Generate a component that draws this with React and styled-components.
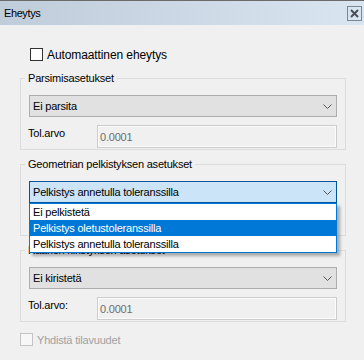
import React from "react"
import styled, { createGlobalStyle } from "styled-components"

const GlobalStyle = createGlobalStyle`
  html, body {
    margin: 0;
    padding: 0;
    background: #f0f0f0;
  }
  body {
    font-family: "Liberation Sans", Arial, sans-serif;
    font-size: 11px;
    letter-spacing: -0.2px;
    color: #000;
  }
`

const Window = styled.div`
  width: 364px;
  height: 360px;
  background: #f0f0f0;
  overflow: hidden;
`

const TitleBar = styled.div`
  height: 24px;
  border-top: 1px solid #6b6b6b;
  background: linear-gradient(to right, #bfccd9, #d9e5f1);
  display: flex;
  align-items: center;
  justify-content: space-between;
  padding: 0 2px 0 4px;
`

const Title = styled.span`
  font-size: 11px;
  letter-spacing: -0.4px;
  margin-top: -1px;
`

const CloseButton = styled.div`
  width: 13px;
  height: 13px;
  border: 1px solid #7d8794;
  display: flex;
  align-items: center;
  justify-content: center;
  margin-top: 1px;
`

const Body = styled.div`
  padding: 23px 18px 0 20px;
  display: flex;
  flex-direction: column;
`

const CheckRow = styled.label`
  display: flex;
  align-items: center;
  gap: 4px;
  height: 13px;
  margin-left: ${p => p.$indent || 0}px;
  margin-top: ${p => p.$top || 0}px;
  color: ${p => (p.$disabled ? "#a0a0a0" : "#000")};
  font-size: ${p => (p.$large ? "12px" : "11px")};
  letter-spacing: ${p => (p.$large ? "-0.1px" : "-0.2px")};
`

const CheckBox = styled.span`
  width: 11px;
  height: 11px;
  border: 1px solid ${p => (p.$disabled ? "#c4c4c4" : "#333")};
  background: ${p => (p.$disabled ? "#f7f7f7" : "#fff")};
  flex: none;
`

const Group = styled.div`
  position: relative;
  border: 1px solid #dcdcdc;
  padding: 16px 8px 1px 8px;
  margin-top: ${p => p.$top}px;
  display: flex;
  flex-direction: column;
  gap: 8px;
`

const Legend = styled.span`
  position: absolute;
  top: -7px;
  left: 4px;
  padding: 0 3px;
  line-height: 13px;
  background: #f0f0f0;
`

const ComboWrap = styled.div`
  position: relative;
  z-index: ${p => (p.$open ? 5 : 1)};
`

const Combo = styled.div`
  height: 20px;
  border: 1px solid ${p => (p.$focused ? "#005499" : "#adadad")};
  background: ${p => (p.$focused ? "#cce4f7" : "#e1e1e1")};
  display: flex;
  align-items: center;
  justify-content: space-between;
  padding: 0 4px 0 3px;
`

const ComboText = styled.span`
  line-height: 13px;
  margin-top: 1px;
`

const DropList = styled.div`
  position: absolute;
  top: 100%;
  left: 0;
  right: 0;
  border: 1px solid #0078d7;
  background: #fff;
  box-shadow: 3px 3px 3px rgba(0, 0, 0, 0.3);
`

const DropItem = styled.div`
  height: 16px;
  line-height: 16px;
  padding-left: 3px;
  background: ${p => (p.$selected ? "#0078d7" : "#fff")};
  color: ${p => (p.$selected ? "#fff" : "#000")};
`

const FieldRow = styled.div`
  display: flex;
  align-items: flex-start;
  visibility: ${p => (p.$covered ? "hidden" : "visible")};
`

const FieldLabel = styled.span`
  width: 68px;
  line-height: 13px;
  padding-top: 2px;
  margin-left: -1px;
  margin-right: 1px;
`

const TextInput = styled.div`
  flex: 1;
  height: 21px;
  border: 1px solid #cccccc;
  box-shadow: inset 0 0 0 1px #fbfbfb;
  background: #f0f0f0;
  color: #6d6d6d;
  display: flex;
  align-items: center;
  padding-left: 2px;
`

const Chevron = () => (
  <svg width="9" height="5" viewBox="0 0 9 5">
    <path d="M0.5 0.5 L4.5 4.5 L8.5 0.5" fill="none" stroke="#555" strokeWidth="1" />
  </svg>
)

const CloseIcon = () => (
  <svg width="9" height="9" viewBox="0 0 9 9">
    <path d="M1 1 L8 8 M8 1 L1 8" stroke="#4a4f57" strokeWidth="2" />
  </svg>
)

const pelkistysOptions = [
  "Ei pelkistetä",
  "Pelkistys oletustoleranssilla",
  "Pelkistys annetulla toleranssilla",
]

export default function App() {
  return (
    <Window>
      <GlobalStyle />
      <TitleBar>
        <Title>Eheytys</Title>
        <CloseButton><CloseIcon /></CloseButton>
      </TitleBar>
      <Body>
        <CheckRow $indent={10} $large>
          <CheckBox />
          Automaattinen eheytys
        </CheckRow>

        <Group $top={17}>
          <Legend>Parsimisasetukset</Legend>
          <ComboWrap>
            <Combo>
              <ComboText>Ei parsita</ComboText>
              <Chevron />
            </Combo>
          </ComboWrap>
          <FieldRow>
            <FieldLabel>Tol.arvo</FieldLabel>
            <TextInput>0.0001</TextInput>
          </FieldRow>
        </Group>

        <Group $top={14}>
          <Legend>Geometrian pelkistyksen asetukset</Legend>
          <ComboWrap $open>
            <Combo $focused>
              <ComboText>Pelkistys annetulla toleranssilla</ComboText>
              <Chevron />
            </Combo>
            <DropList>
              {pelkistysOptions.map((opt, i) => (
                <DropItem key={opt} $selected={i === 1}>{opt}</DropItem>
              ))}
            </DropList>
          </ComboWrap>
          {/* row under the open list, kept for spacing only */}
          <FieldRow $covered>
            <FieldLabel>Tol.arvo</FieldLabel>
            <TextInput>0.0001</TextInput>
          </FieldRow>
        </Group>

        <Group $top={14}>
          <Legend>Kaarien kiristyksen asetukset</Legend>
          <ComboWrap>
            <Combo>
              <ComboText>Ei kiristetä</ComboText>
              <Chevron />
            </Combo>
          </ComboWrap>
          <FieldRow>
            <FieldLabel>Tol.arvo:</FieldLabel>
            <TextInput>0.0001</TextInput>
          </FieldRow>
        </Group>

        <CheckRow $top={11} $disabled>
          <CheckBox $disabled />
          Yhdistä tilavuudet
        </CheckRow>
      </Body>
    </Window>
  )
}
